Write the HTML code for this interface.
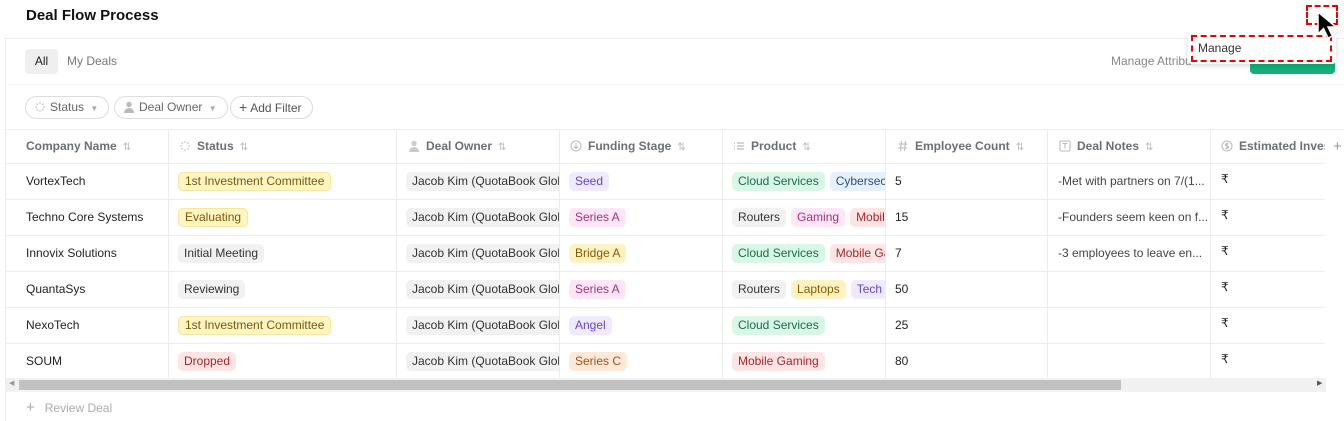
<!DOCTYPE html>
<html><head><meta charset="utf-8"><style>
*{box-sizing:border-box;margin:0;padding:0}
body{width:1344px;height:421px;overflow:hidden;background:#fff;font-family:"Liberation Sans",sans-serif;position:relative;color:#222}
.a{position:absolute}
.hl{position:absolute;height:1px;background:#ececec}
.vl{position:absolute;width:1px;background:#ececec}
.th{position:absolute;top:130px;height:33px;line-height:33px;font-size:12px;color:#6b6f76;font-weight:bold;white-space:nowrap;overflow:hidden}
.th .s{color:#bbb;font-weight:normal;font-size:10px;margin-left:6px}
.th svg{vertical-align:-2px;margin-right:6px}
.td{position:absolute;height:36px;line-height:36px;font-size:12px;color:#222;white-space:nowrap;overflow:hidden}
.tag{display:inline-block;height:19px;line-height:19px;padding:0 6px;border-radius:5px;font-size:12px;margin-right:5px;vertical-align:middle}
.y{background:#fdf5c4;color:#7a5a00;border:1px solid #f5e69a;line-height:17px}
.g{background:#f1f1f1;color:#333}
.p{background:#efeaff;color:#6446c8}
.pk{background:#fde6f5;color:#a3337e}
.br{background:#fdf3c2;color:#8a5a00}
.or{background:#fde9d7;color:#a2501a}
.r{background:#fde5e5;color:#a8262a}
.gr{background:#d8f7e6;color:#1c6b47}
.bl{background:#e7f0fd;color:#2c4e8a}
.pill{position:absolute;top:96px;height:23px;border:1px solid #ddd;border-radius:12px;font-size:12px;color:#666;line-height:21px;padding:0 10px 0 8px;white-space:nowrap}
</style></head><body>
<div class="vl" style="left:5px;top:38px;height:383px;background:#eee"></div>
<div class="a" style="left:26px;top:7px;font-size:15px;font-weight:bold;color:#111">Deal Flow Process</div>
<div class="hl" style="left:5px;top:38px;width:1339px"></div>
<div class="a" style="left:25px;top:49px;width:33px;height:25px;background:#efefef;border-radius:4px;font-size:12px;line-height:25px;text-align:center;color:#222">All</div>
<div class="a" style="left:67px;top:49px;font-size:12px;line-height:25px;color:#777">My Deals</div>
<div class="a" style="left:1111px;top:49px;font-size:12px;line-height:25px;color:#888">Manage Attribu</div>
<div class="a" style="left:1250px;top:60px;width:85px;height:14px;background:#15b07c;border-radius:0 0 4px 4px"></div>
<div class="hl" style="left:5px;top:84px;width:1339px;background:#f3f3f3"></div>
<div class="pill" style="left:25px"><svg width="12" height="12" viewBox="0 0 12 12" style="vertical-align:-2px;margin-right:4px" stroke="#ccc" stroke-width="1.3"><path d="M6 1v2M6 9v2M1 6h2M9 6h2M2.5 2.5l1.4 1.4M8.1 8.1l1.4 1.4M2.5 9.5l1.4-1.4M8.1 3.9l1.4-1.4"/></svg>Status <span style="font-size:8px;color:#aaa;margin-left:3px">▼</span></div>
<div class="pill" style="left:114px"><svg width="12" height="12" viewBox="0 0 12 12" style="vertical-align:-2px;margin-right:4px" fill="#bbb"><circle cx="6" cy="3.5" r="2.7"/><path d="M1 12c0-3 2-5 5-5s5 2 5 5z"/></svg>Deal Owner <span style="font-size:8px;color:#aaa;margin-left:3px">▼</span></div>
<div class="pill" style="left:230px;color:#555"><span style="font-size:14px;margin-right:3px">+</span>Add Filter</div>
<div class="hl" style="left:5px;top:129px;width:1339px"></div>
<div class="hl" style="left:5px;top:163px;width:1320px"></div>
<div class="hl" style="left:5px;top:199px;width:1320px"></div>
<div class="hl" style="left:5px;top:235px;width:1320px"></div>
<div class="hl" style="left:5px;top:271px;width:1320px"></div>
<div class="hl" style="left:5px;top:307px;width:1320px"></div>
<div class="hl" style="left:5px;top:343px;width:1320px"></div>
<div class="vl" style="left:168px;top:130px;height:248px"></div>
<div class="vl" style="left:396px;top:130px;height:248px"></div>
<div class="vl" style="left:559px;top:130px;height:248px"></div>
<div class="vl" style="left:722px;top:130px;height:248px"></div>
<div class="vl" style="left:885px;top:130px;height:248px"></div>
<div class="vl" style="left:1047px;top:130px;height:248px"></div>
<div class="vl" style="left:1210px;top:130px;height:248px"></div>

<div class="th" style="left:26px">Company Name<span class="s">⇅</span></div>
<div class="th" style="left:179px"><svg width="12" height="12" viewBox="0 0 12 12" stroke="#ccc" stroke-width="1.3"><path d="M6 1v2M6 9v2M1 6h2M9 6h2M2.5 2.5l1.4 1.4M8.1 8.1l1.4 1.4M2.5 9.5l1.4-1.4M8.1 3.9l1.4-1.4"/></svg>Status<span class="s">⇅</span></div>
<div class="th" style="left:408px"><svg width="12" height="12" viewBox="0 0 12 12" fill="#ccc"><circle cx="6" cy="3.5" r="2.7"/><path d="M1 12c0-3 2-5 5-5s5 2 5 5z"/></svg>Deal Owner<span class="s">⇅</span></div>
<div class="th" style="left:570px"><svg width="12" height="12" viewBox="0 0 12 12" fill="none" stroke="#bbb" stroke-width="1.1"><circle cx="6" cy="6" r="5"/><path d="M6 3v5M4 6.5l2 2 2-2"/></svg>Funding Stage<span class="s">⇅</span></div>
<div class="th" style="left:733px"><svg width="12" height="12" viewBox="0 0 12 12" stroke="#bbb" stroke-width="1.2"><path d="M1 3h1M4 3h7M1 6h1M4 6h7M1 9h1M4 9h7"/></svg>Product<span class="s">⇅</span></div>
<div class="th" style="left:897px"><svg width="12" height="12" viewBox="0 0 12 12" stroke="#bbb" stroke-width="1.1"><path d="M4.5 1l-1 10M8.5 1l-1 10M1.5 4h9M1 8h9"/></svg>Employee Count<span class="s">⇅</span></div>
<div class="th" style="left:1059px"><svg width="12" height="12" viewBox="0 0 12 12" fill="none" stroke="#bbb" stroke-width="1.1"><rect x="1" y="1" width="10" height="10" rx="1.5"/><path d="M3.5 3.5h5M6 3.5v5"/></svg>Deal Notes<span class="s">⇅</span></div>
<div class="th" style="left:1221px;width:104px"><svg width="12" height="12" viewBox="0 0 12 12" fill="none" stroke="#bbb" stroke-width="1.1"><circle cx="6" cy="6" r="5"/><path d="M7.5 4.2c-.5-.6-3-.8-3 .6s3 .8 3 2.4-2.6 1.3-3.2.6M6 2.5v7"/></svg>Estimated Invest</div>
<div class="th" style="left:1333px;color:#999;font-weight:normal;font-size:15px">+</div>

<div class="td" style="left:26px;top:163px">VortexTech</div>
<div class="td" style="left:26px;top:199px">Techno Core Systems</div>
<div class="td" style="left:26px;top:235px">Innovix Solutions</div>
<div class="td" style="left:26px;top:271px">QuantaSys</div>
<div class="td" style="left:26px;top:307px">NexoTech</div>
<div class="td" style="left:26px;top:343px">SOUM</div>

<div class="td" style="left:178px;top:163px"><span class="tag y">1st Investment Committee</span></div>
<div class="td" style="left:178px;top:199px"><span class="tag y">Evaluating</span></div>
<div class="td" style="left:178px;top:235px"><span class="tag g">Initial Meeting</span></div>
<div class="td" style="left:178px;top:271px"><span class="tag g">Reviewing</span></div>
<div class="td" style="left:178px;top:307px"><span class="tag y">1st Investment Committee</span></div>
<div class="td" style="left:178px;top:343px"><span class="tag r">Dropped</span></div>

<div class="td" style="left:406px;top:163px;width:153px"><span class="tag g">Jacob Kim (QuotaBook Global)</span></div>
<div class="td" style="left:406px;top:199px;width:153px"><span class="tag g">Jacob Kim (QuotaBook Global)</span></div>
<div class="td" style="left:406px;top:235px;width:153px"><span class="tag g">Jacob Kim (QuotaBook Global)</span></div>
<div class="td" style="left:406px;top:271px;width:153px"><span class="tag g">Jacob Kim (QuotaBook Global)</span></div>
<div class="td" style="left:406px;top:307px;width:153px"><span class="tag g">Jacob Kim (QuotaBook Global)</span></div>
<div class="td" style="left:406px;top:343px;width:153px"><span class="tag g">Jacob Kim (QuotaBook Global)</span></div>

<div class="td" style="left:569px;top:163px"><span class="tag p">Seed</span></div>
<div class="td" style="left:569px;top:199px"><span class="tag pk">Series A</span></div>
<div class="td" style="left:569px;top:235px"><span class="tag br">Bridge A</span></div>
<div class="td" style="left:569px;top:271px"><span class="tag pk">Series A</span></div>
<div class="td" style="left:569px;top:307px"><span class="tag p">Angel</span></div>
<div class="td" style="left:569px;top:343px"><span class="tag or">Series C</span></div>

<div class="td" style="left:732px;top:163px;width:153px"><span class="tag gr">Cloud Services</span><span class="tag bl">Cybersecurity</span></div>
<div class="td" style="left:732px;top:199px;width:153px"><span class="tag g">Routers</span><span class="tag pk">Gaming</span><span class="tag r">Mobile</span></div>
<div class="td" style="left:732px;top:235px;width:153px"><span class="tag gr">Cloud Services</span><span class="tag r">Mobile Gaming</span></div>
<div class="td" style="left:732px;top:271px;width:153px"><span class="tag g">Routers</span><span class="tag br">Laptops</span><span class="tag p">Tech</span></div>
<div class="td" style="left:732px;top:307px;width:153px"><span class="tag gr">Cloud Services</span></div>
<div class="td" style="left:732px;top:343px;width:153px"><span class="tag r">Mobile Gaming</span></div>

<div class="td" style="left:895px;top:163px">5</div>
<div class="td" style="left:895px;top:199px">15</div>
<div class="td" style="left:895px;top:235px">7</div>
<div class="td" style="left:895px;top:271px">50</div>
<div class="td" style="left:895px;top:307px">25</div>
<div class="td" style="left:895px;top:343px">80</div>

<div class="td" style="left:1058px;top:163px;color:#444">-Met with partners on 7/(1...</div>
<div class="td" style="left:1058px;top:199px;color:#444">-Founders seem keen on f...</div>
<div class="td" style="left:1058px;top:235px;color:#444">-3 employees to leave en...</div>
<div class="td" style="left:1221px;top:161px">₹</div>
<div class="td" style="left:1221px;top:197px">₹</div>
<div class="td" style="left:1221px;top:233px">₹</div>
<div class="td" style="left:1221px;top:269px">₹</div>
<div class="td" style="left:1221px;top:305px">₹</div>
<div class="td" style="left:1221px;top:341px">₹</div>

<div class="a" style="left:6px;top:378px;width:1320px;height:14px;background:#f1f1f1"></div>
<div class="a" style="left:19px;top:380px;width:1102px;height:10px;background:#c1c1c1"></div>
<div class="a" style="left:9px;top:379px;font-size:7px;color:#999">◀</div>
<div class="a" style="left:1317px;top:379px;font-size:7px;color:#555">▶</div>

<div class="a" style="left:26px;top:400px;font-size:12px;color:#aaa;line-height:16px"><span style="font-size:15px;margin-right:10px">+</span>Review Deal</div>

<div class="a" style="left:1188px;top:34px;width:148px;height:30px;background:#fff;box-shadow:0 2px 6px rgba(0,0,0,.15);border-radius:4px"></div>
<div class="a" style="left:1191px;top:35px;width:141px;height:27px;border:2px dashed #e00"></div>
<div class="a" style="left:1198px;top:41px;font-size:12px;color:#333">Manage</div>
<div class="a" style="left:1306px;top:5px;width:32px;height:20px;border:2px dashed #e00"></div>
<div class="a" style="left:1316px;top:5px;font-size:12px;color:#444;letter-spacing:-1px">...</div>
<svg class="a" style="left:1314px;top:10px" width="30" height="32" viewBox="0 0 30 32"><path d="M4 2 L4 24 L9.5 18.5 L14 28 L18.5 26 L14 17 L22 17 Z" fill="#000" stroke="#fff" stroke-width="1.5"/></svg>
</body></html>
